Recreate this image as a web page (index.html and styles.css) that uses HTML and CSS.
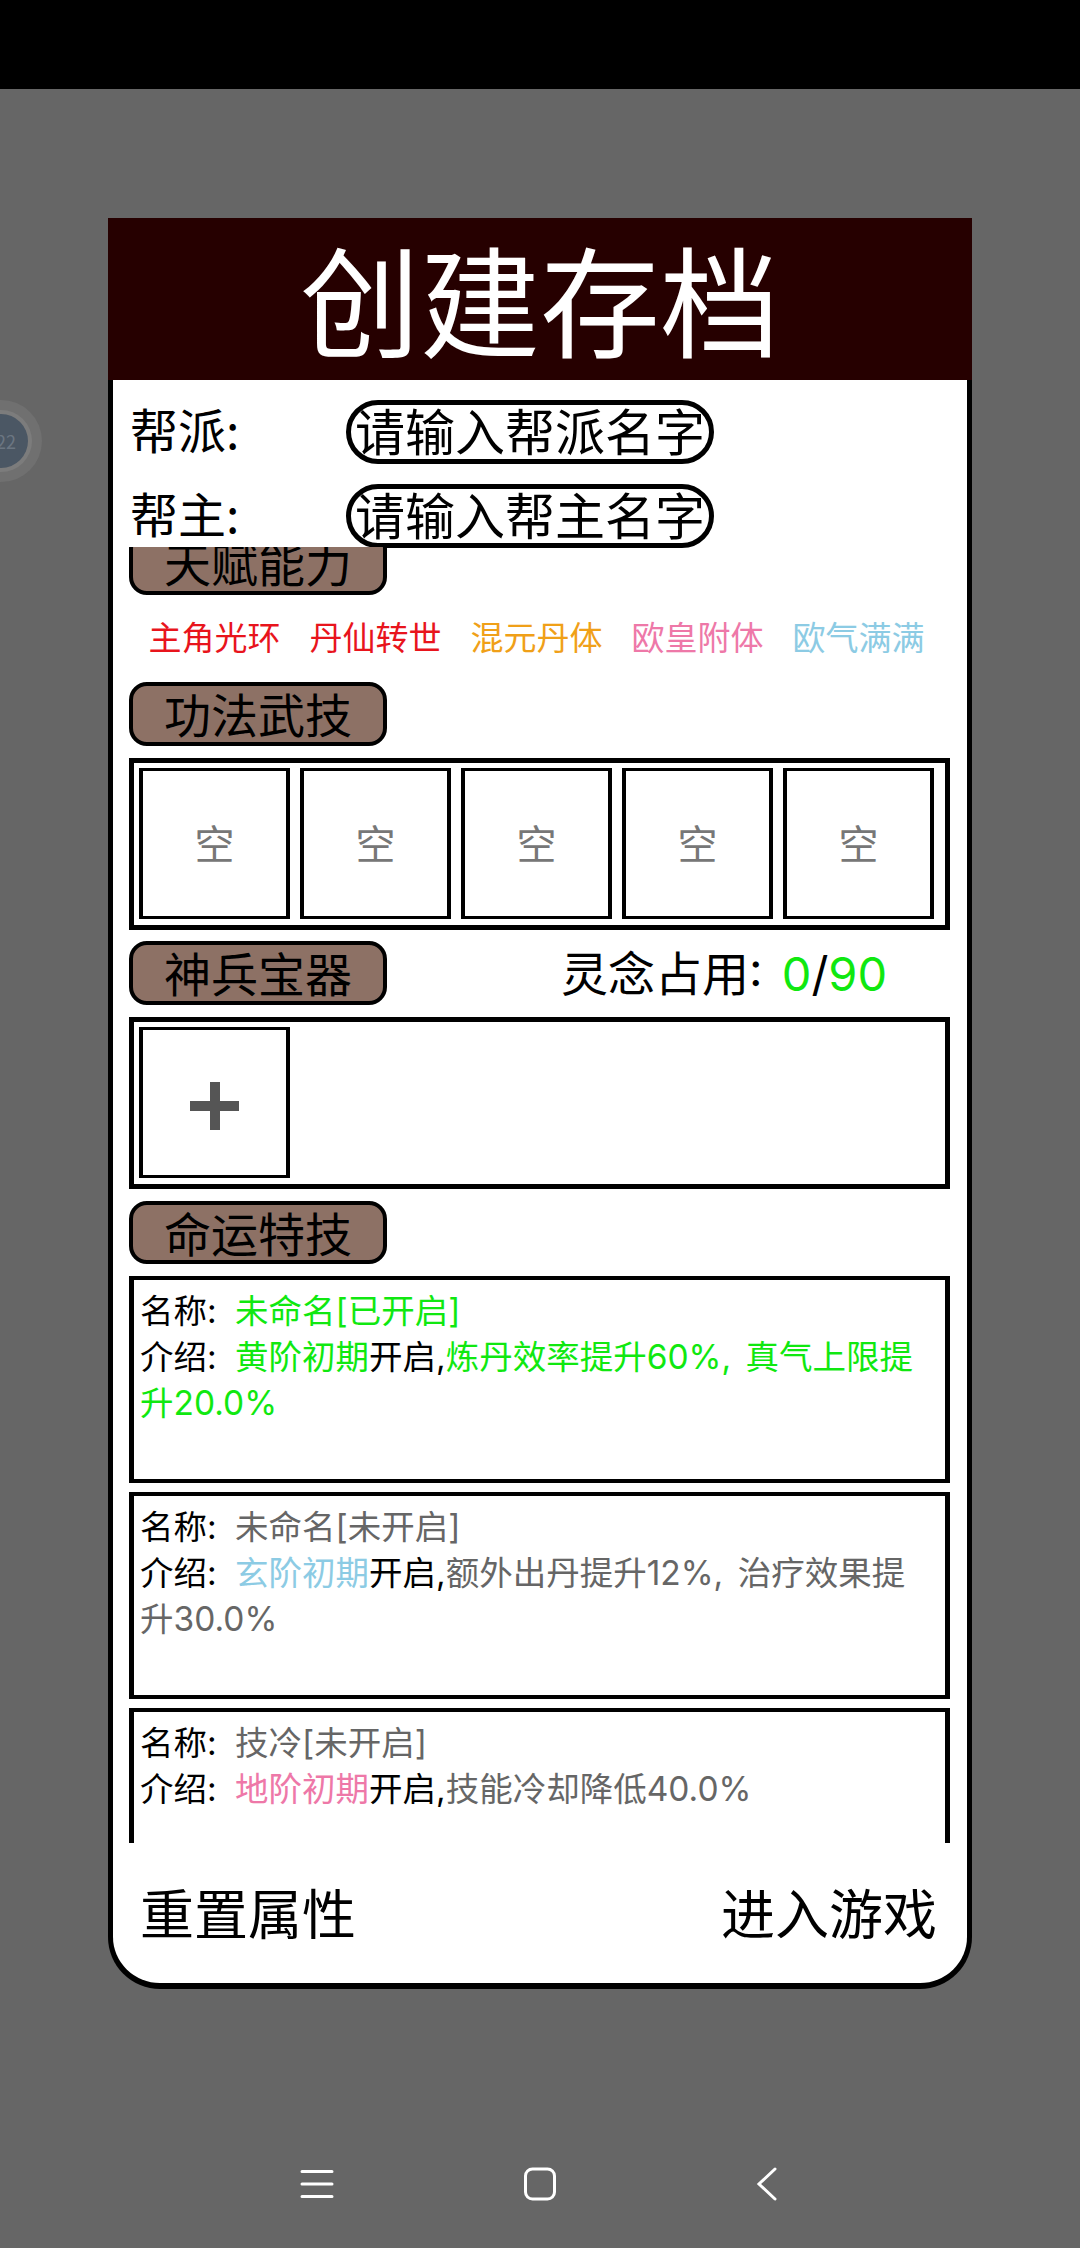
FILE: index.html
```html
<!DOCTYPE html>
<html lang="zh-CN">
<head>
<meta charset="utf-8">
<title>创建存档</title>
<link rel="stylesheet" href="styles.css">
</head>
<body>
<div class="status"></div>
<main class="stage">
  <div class="floater"><div class="floater-core">22</div></div>
  <section class="panel">
    <h1 class="title">创建存档</h1>
    <div class="form">
      <div class="form-row"><span class="form-label">帮派:</span><div class="pill">请输入帮派名字</div></div>
      <div class="form-row"><span class="form-label">帮主:</span><div class="pill">请输入帮主名字</div></div>
    </div>
    <div class="scroll">
      <div class="scroll-content">
        <div class="tag">天赋能力</div>
        <div class="talents">
          <span class="talent c-red">主角光环</span>
          <span class="talent c-red">丹仙转世</span>
          <span class="talent c-orange">混元丹体</span>
          <span class="talent c-pink">欧皇附体</span>
          <span class="talent c-blue">欧气满满</span>
        </div>
        <div class="tag">功法武技</div>
        <div class="box">
          <div class="slot">空</div>
          <div class="slot">空</div>
          <div class="slot">空</div>
          <div class="slot">空</div>
          <div class="slot">空</div>
        </div>
        <div class="tag-row">
          <div class="tag">神兵宝器</div>
          <div class="spirit">灵念占用: <span class="c-green">0</span>/<span class="c-green">90</span></div>
        </div>
        <div class="box">
          <div class="slot"><span class="plus"></span></div>
        </div>
        <div class="tag">命运特技</div>
        <div class="cards">
          <article class="card">
            <div><span class="lbl">名称:</span><span class="c-green">未命名[已开启]</span></div>
            <div><span class="lbl">介绍:</span><span class="c-green">黄阶初期</span>开启,<span class="c-green">炼丹效率提升60%, 真气上限提升20.0%</span></div>
          </article>
          <article class="card">
            <div><span class="lbl">名称:</span><span class="c-gray">未命名[未开启]</span></div>
            <div><span class="lbl">介绍:</span><span class="c-blue">玄阶初期</span>开启,<span class="c-gray">额外出丹提升12%, 治疗效果提升30.0%</span></div>
          </article>
          <article class="card">
            <div><span class="lbl">名称:</span><span class="c-gray">技冷[未开启]</span></div>
            <div><span class="lbl">介绍:</span><span class="c-pink">地阶初期</span>开启,<span class="c-gray">技能冷却降低40.0%</span></div>
          </article>
        </div>
      </div>
    </div>
    <footer class="actions">
      <span class="action">重置属性</span>
      <span class="action">进入游戏</span>
    </footer>
  </section>
</main>
<nav class="nav">
  <svg class="nav-icon nav-menu" viewBox="0 0 40 40" width="40" height="40"><path d="M5 7.5H35M5 20H35M5 32.5H35" fill="none" stroke="#fff" stroke-width="3" stroke-linecap="round"/></svg>
  <svg class="nav-icon nav-home" viewBox="0 0 40 40" width="40" height="40"><rect x="5.5" y="5" width="29" height="30" rx="7" fill="none" stroke="#fff" stroke-width="3"/></svg>
  <svg class="nav-icon nav-back" viewBox="0 0 40 40" width="40" height="40"><path d="M28 5L12 20L28 35" fill="none" stroke="#fff" stroke-width="3" stroke-linecap="round" stroke-linejoin="miter"/></svg>
</nav>
</body>
</html>
```
FILE: styles.css
```css
* { box-sizing: border-box; margin: 0; padding: 0; }
html, body { width: 1080px; height: 2248px; overflow: hidden; }
body {
  display: flex;
  flex-direction: column;
  background: #666666;
  color: #000;
  font-family: "Noto Sans CJK SC", "Noto Sans", sans-serif;
}
.status { height: 89px; background: #000; flex: none; }
.stage { position: relative; flex: 1; padding: 129px 108px 0; }
.floater {
  position: absolute;
  left: -40px;
  top: 311px;
  width: 82px;
  height: 82px;
  border-radius: 50%;
  background: #707070;
  display: flex;
  align-items: center;
  justify-content: center;
}
.floater-core {
  width: 54px;
  height: 54px;
  border-radius: 50%;
  background: #4b5764;
  box-shadow: 0 0 0 4px #7c7c7c;
  color: #6b7682;
  font-size: 18px;
  line-height: 54px;
  text-align: right;
  padding-right: 12px;
}
.panel {
  width: 864px;
  height: 1771px;
  background: #fff;
  border: solid #000;
  border-width: 0 5px 6px;
  border-radius: 0 0 52px 52px;
  display: flex;
  flex-direction: column;
}
.title {
  margin: 0 -5px;
  height: 162px;
  background: #260000;
  color: #fff;
  font-size: 120px;
  font-weight: 400;
  line-height: 159px;
  text-align: center;
}
.form { height: 167px; padding: 20px 0 0 17px; display: flex; flex-direction: column; gap: 20px; flex: none; }
.form-row { display: flex; align-items: center; height: 64px; }
.form-label { width: 216px; font-size: 48px; line-height: 54px; margin-bottom: 8px; }
.pill {
  width: 368px;
  height: 64px;
  border: 5px solid #000;
  border-radius: 32px;
  background: #fff;
  font-size: 50px;
  line-height: 48px;
  text-align: center;
  white-space: nowrap;
}
.scroll { height: 1296px; overflow: hidden; flex: none; }
.scroll-content { margin-top: -16px; padding: 0 16px; display: flex; flex-direction: column; gap: 12px; }
.tag {
  width: 258px;
  height: 63.5px;
  border: 4px solid #000;
  border-radius: 18px;
  background: #8d7165;
  font-size: 47px;
  line-height: 54px;
  text-align: center;
  flex: none;
}
.talents { display: flex; height: 63.5px; padding: 0 5px 5px; align-items: center; }
.talent { width: 161px; font-size: 33px; line-height: 44px; text-align: center; white-space: nowrap; }
.box {
  width: 821px;
  height: 172px;
  border: 5px solid #000;
  padding: 5px;
  display: flex;
  gap: 10px;
  flex: none;
}
.slot {
  width: 151px;
  height: 151px;
  border: solid #000;
  border-width: 3px 4px;
  color: #777;
  font-size: 40px;
  line-height: 56px;
  padding-bottom: 2px;
  display: flex;
  align-items: center;
  justify-content: center;
}
.plus { position: relative; display: block; width: 49px; height: 48px; margin-top: 10px; }
.plus::before, .plus::after { content: ""; position: absolute; background: #555; }
.plus::before { left: 0; right: 0; top: 19px; height: 10px; }
.plus::after { top: 0; bottom: 0; left: 20px; width: 10px; }
.tag-row { display: flex; align-items: center; margin-top: -0.5px; }
.spirit {
  margin-left: 174px;
  padding-top: 3px;
  font-family: "Inter", "Noto Sans CJK SC", sans-serif;
  font-size: 47px;
  line-height: 60px;
  word-spacing: 6px;
  white-space: nowrap;
}
.cards { display: flex; flex-direction: column; gap: 9px; }
.card {
  width: 821px;
  height: 207px;
  border: solid #000;
  border-width: 4px 5px;
  padding: 8px 10px 6px 6px;
  font-family: "Inter", "Noto Sans CJK SC", sans-serif;
  font-size: 33.5px;
  line-height: 46px;
  word-spacing: 5px;
  flex: none;
}
.lbl { display: inline-block; width: 95px; }
.actions { flex: 1; display: flex; justify-content: space-between; align-items: center; padding: 0 30px 2px 27px; }
.action { font-size: 54px; line-height: 70px; }
.c-red { color: #e8141c; }
.c-orange { color: #f0a018; }
.c-pink { color: #ee78a8; }
.c-blue { color: #8ccbe4; }
.c-green { color: #10e810; }
.c-gray { color: #666; }
.nav { height: 118px; flex: none; display: flex; align-items: flex-start; padding: 34px 0 0 297px; }
.nav-icon { display: block; flex: none; }
.nav-home { margin-left: 183px; }
.nav-back { margin-left: 187px; }
```
